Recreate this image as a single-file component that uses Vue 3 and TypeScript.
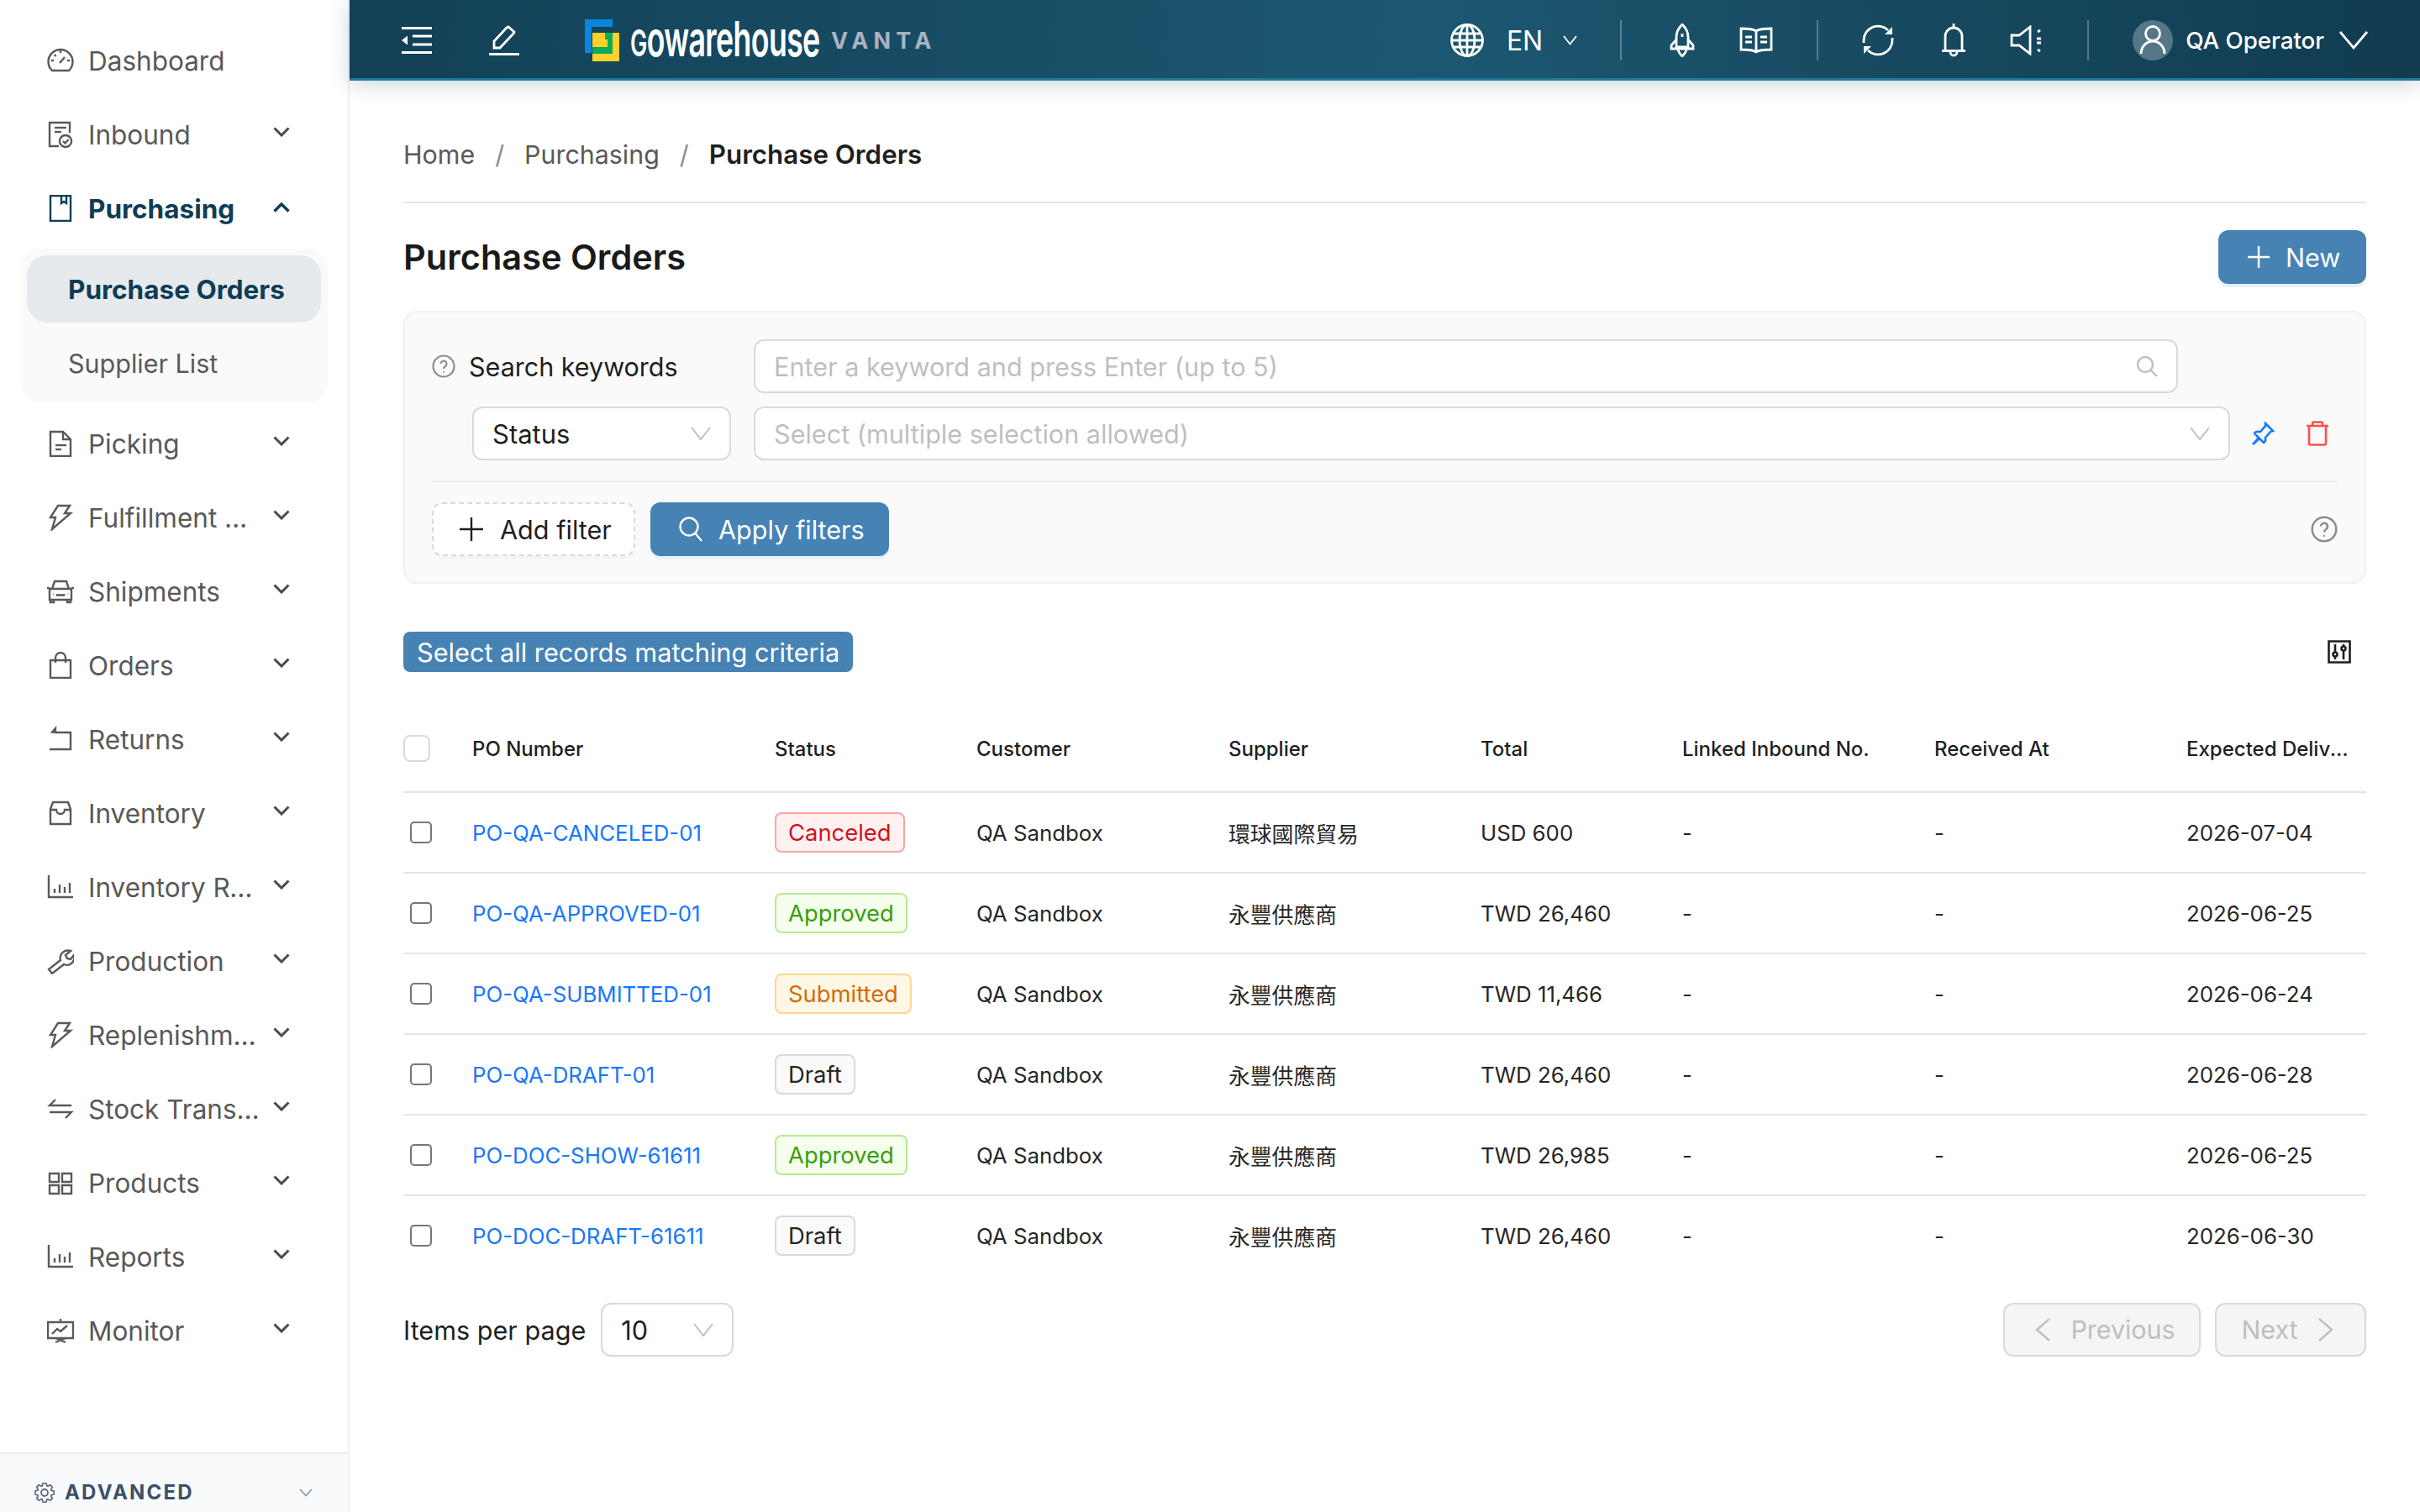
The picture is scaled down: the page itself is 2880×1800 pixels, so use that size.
<script setup lang="ts">
type NavItem = { label: string; icon: string }

const icons: Record<string, string[]> = {
  dashboard: ['M6 28A14.5 14.5 0 1 1 26 28Z', 'M15 19l6-7', 'M16 4v3', 'M5 16h3', 'M24 16h3', 'M8.5 9l2 2'],
  inbound: ['M27 14V2H3v28h11', 'M9 8h14', 'M9 13h8', 'M22 17a7 7 0 1 0 .01 0Z', 'M19 24l2.5 2.5 4-4.5'],
  book: ['M4 1h24v30H4Z', 'M17 1v9l3-2 3 2V1'],
  file: ['M4 2h15l9 9v20H4Z', 'M19 2v9h9', 'M10 18h13', 'M10 23h7'],
  bolt: ['M13 2h14l-6 9h7L6 30l4-14H4Z'],
  car: ['M6 13l3-9h14l3 9', 'M3 13h26v13H3Z', 'M0 12h3', 'M29 12h3', 'M4 26v3h4v-3', 'M24 26v3h4v-3', 'M12 19v1.5h8V19', 'M7 19h.5', 'M24.5 19h.5'],
  bag: ['M4 10h24v21H4Z', 'M10 13V7a6 6 0 0 1 12 0v6'],
  returns: ['M10 3L6 7.5 10 8Z', 'M10 8h18v20H3'],
  inbox: ['M4 11l3-8h18l3 8v18H4Z', 'M4 12h7a5 5 0 0 0 10 0h7'],
  chart: ['M2 2v26h29', 'M9 23v-5', 'M15 23V13', 'M21 23v-7', 'M27 23V11'],
  wrench: ['M2 26l14-11c-2-7 4-13 12-11l-6 5 2 4 4 1 4-5c2 8-5 14-12 11L6 31Z'],
  swap: ['M10 5L3 12h26', 'M3 20h26l-7 7'],
  grid: ['M3 5h11v10H3Z', 'M18 5h11v10H18Z', 'M3 19h11v10H3Z', 'M18 19h11v10H18Z'],
  monitor: ['M1 6h30v19H1Z', 'M16 6V2', 'M6 20l6-6 4 3 8-7', 'M10 30l12-5', 'M22 30l-12-5'],
}

const navItems: NavItem[] = [
  { label: 'Picking', icon: 'file' },
  { label: 'Fulfillment Center', icon: 'bolt' },
  { label: 'Shipments', icon: 'car' },
  { label: 'Orders', icon: 'bag' },
  { label: 'Returns', icon: 'returns' },
  { label: 'Inventory', icon: 'inbox' },
  { label: 'Inventory Reports', icon: 'chart' },
  { label: 'Production', icon: 'wrench' },
  { label: 'Replenishment', icon: 'bolt' },
  { label: 'Stock Transfer', icon: 'swap' },
  { label: 'Products', icon: 'grid' },
  { label: 'Reports', icon: 'chart' },
  { label: 'Monitor', icon: 'monitor' },
]

const columns = ['PO Number', 'Status', 'Customer', 'Supplier', 'Total', 'Linked Inbound No.', 'Received At', 'Expected Delivery']
const colWidths = [82, 360, 240, 300, 300, 240, 300, 300, 214]

const rows = [
  { po: 'PO-QA-CANCELED-01', status: 'Canceled', supplier: '環球國際貿易', total: 'USD 600', date: '2026-07-04' },
  { po: 'PO-QA-APPROVED-01', status: 'Approved', supplier: '永豐供應商', total: 'TWD 26,460', date: '2026-06-25' },
  { po: 'PO-QA-SUBMITTED-01', status: 'Submitted', supplier: '永豐供應商', total: 'TWD 11,466', date: '2026-06-24' },
  { po: 'PO-QA-DRAFT-01', status: 'Draft', supplier: '永豐供應商', total: 'TWD 26,460', date: '2026-06-28' },
  { po: 'PO-DOC-SHOW-61611', status: 'Approved', supplier: '永豐供應商', total: 'TWD 26,985', date: '2026-06-25' },
  { po: 'PO-DOC-DRAFT-61611', status: 'Draft', supplier: '永豐供應商', total: 'TWD 26,460', date: '2026-06-30' },
]

// small cog outline for the sidebar footer
function gearPath(c: number, inner: number, outer: number, teeth: number) {
  const pts: string[] = []
  const step = (Math.PI * 2) / teeth
  for (let i = 0; i < teeth; i++) {
    const a = i * step
    for (const [off, r] of [[-0.32, inner], [-0.14, outer], [0.14, outer], [0.32, inner]] as const) {
      const t = a + off * step * 1.4
      pts.push(`${(c + Math.cos(t) * r).toFixed(2)} ${(c + Math.sin(t) * r).toFixed(2)}`)
    }
  }
  return `M${pts.join('L')}Z`
}
const gear = gearPath(12, 8.5, 11.5, 8)
</script>

<template>
  <div class="app">
    <aside class="sidebar">
      <nav class="nav">
        <a class="nav-item">
          <svg class="nav-icon" viewBox="0 0 32 32"><path v-for="d in icons.dashboard" :key="d" :d="d" /></svg>
          <span class="nav-label">Dashboard</span>
        </a>
        <a class="nav-item">
          <svg class="nav-icon" viewBox="0 0 32 32"><path v-for="d in icons.inbound" :key="d" :d="d" /></svg>
          <span class="nav-label">Inbound</span>
          <svg class="nav-chev" viewBox="0 0 20 12"><path d="M1.5 1.5L10 10l8.5-8.5" /></svg>
        </a>
        <a class="nav-item nav-item--active">
          <svg class="nav-icon" viewBox="0 0 32 32"><path v-for="d in icons.book" :key="d" :d="d" /></svg>
          <span class="nav-label">Purchasing</span>
          <svg class="nav-chev nav-chev--up" viewBox="0 0 20 12"><path d="M1.5 10.5L10 2l8.5 8.5" /></svg>
        </a>
        <div class="submenu">
          <a class="sub-item sub-item--active">Purchase Orders</a>
          <a class="sub-item">Supplier List</a>
        </div>
        <a v-for="item in navItems" :key="item.label" class="nav-item">
          <svg class="nav-icon" viewBox="0 0 32 32"><path v-for="d in icons[item.icon]" :key="d" :d="d" /></svg>
          <span class="nav-label">{{ item.label }}</span>
          <svg class="nav-chev" viewBox="0 0 20 12"><path d="M1.5 1.5L10 10l8.5-8.5" /></svg>
        </a>
      </nav>
      <div class="side-foot">
        <svg class="gear" viewBox="0 0 24 24"><path :d="gear" /><circle cx="12" cy="12" r="4" /></svg>
        <span class="side-foot__label">ADVANCED</span>
        <svg class="side-foot__chev" viewBox="0 0 16 10"><path d="M1 1l7 7.5L15 1" /></svg>
      </div>
    </aside>

    <div class="main">
      <header class="topbar">
        <svg class="tb-icon" width="36" height="32" viewBox="0 0 36 32">
          <path d="M0 1.5h36M13 11h23M13 21h23M0 30.500h36" />
          <path class="solid" d="M0 16l7-5.5v11Z" />
        </svg>
        <svg class="tb-icon tb-edit" width="36" height="36" viewBox="0 0 36 36">
          <path d="M6 27V19L21 3l2-1 7 6-1 2L13 27Z" />
          <path d="M0 34.500h36" />
        </svg>
        <svg class="logo" width="41" height="50" viewBox="0 0 41 50">
          <path fill="#0a86dc" d="M0 0h33v9H8v31H0Z" />
          <path fill="#fdd02a" d="M9 16h32v34H9Z" />
          <path fill="#0bab5b" d="M9 41h24V16h-9v8h3v9H9Z" />
        </svg>
        <div class="wordmark"><span class="wordmark__g">g</span>owarehouse</div>
        <span class="vanta">VANTA</span>

        <div class="tb-right">
          <div class="tb-lang">
            <svg class="tb-icon" width="40" height="40" viewBox="0 0 40 40">
              <circle cx="20" cy="20" r="18.5" />
              <ellipse cx="20" cy="20" rx="9" ry="18.5" />
              <path d="M20 1.5v37M3 12h34M3 28h34M1.500 20h37" />
            </svg>
            <span class="tb-lang__text">EN</span>
            <svg class="tb-icon tb-thin" width="17" height="12" viewBox="0 0 17 12"><path d="M1 1l7.500 9.500L16 1" /></svg>
          </div>
          <span class="tb-divider tb-divider--first"></span>
          <div class="tb-group">
            <svg class="tb-icon" width="32" height="40" viewBox="0 0 32 40">
              <path d="M16 1c-5 5-7 10-7 15v12h14V16c0-5-2-10-7-15Z" />
              <path d="M9 19l-6 7v4h26v-4l-6-7" />
              <path d="M11 30c0 4 3 7 5 9 2-2 5-5 5-9" />
              <path d="M16 12v4" />
            </svg>
            <svg class="tb-icon" width="40" height="32" viewBox="0 0 40 32">
              <path d="M20 5C16 2 8 2 2 2v25c6 0 14 0 18 3 4-3 12-3 18-3V2c-6 0-14 0-18 3Z" />
              <path d="M20 5v25M7 12h8M7 18h8M25 12h8M25 18h8" />
            </svg>
          </div>
          <span class="tb-divider"></span>
          <div class="tb-group">
            <svg class="tb-icon tb-sync" width="38" height="38" viewBox="0 0 38 38">
              <path d="M2 22V19A17 17 0 0 1 31 7" />
              <path d="M36 16v3A17 17 0 0 1 7 31" />
              <path class="solid" d="M36 3v9h-9Z" />
              <path class="solid" d="M2 35v-9h9Z" />
            </svg>
            <svg class="tb-icon" width="30" height="40" viewBox="0 0 30 40">
              <path d="M15 0v4M5 32V15a10 10 0 0 1 20 0v17" />
              <path d="M1 32.500h28" />
              <path d="M11 34a4 4 0 0 0 8 0" />
            </svg>
            <svg class="tb-icon" width="40" height="36" viewBox="0 0 40 36">
              <path d="M24 2L11 12H2v12h9l13 10Z" />
              <path d="M33 8l3-2M32 16h5M32 21h5M33 29l3 2" />
            </svg>
          </div>
          <span class="tb-divider"></span>
          <div class="tb-user">
            <span class="avatar">
              <svg class="tb-icon" width="32" height="36" viewBox="0 0 32 36">
                <circle cx="16" cy="10" r="8.5" />
                <path d="M2 34c0-8 6-15 14-15s14 7 14 15" />
              </svg>
            </span>
            <span class="tb-user__name">QA Operator</span>
            <svg class="tb-icon" width="34" height="22" viewBox="0 0 34 22"><path d="M1 1l16 19L33 1" /></svg>
          </div>
        </div>
      </header>

      <main class="content">
        <div class="crumbs">
          <span>Home</span><span class="crumbs__sep">/</span>
          <span>Purchasing</span><span class="crumbs__sep">/</span>
          <span class="crumbs__current">Purchase Orders</span>
        </div>

        <div class="title-row">
          <h1 class="title">Purchase Orders</h1>
          <button class="btn btn--primary btn--new">
            <svg width="26" height="26" viewBox="0 0 26 26"><path d="M13 0v26M0 13h26" /></svg>
            New
          </button>
        </div>

        <section class="filters">
          <div class="filter-row">
            <div class="filter-label">
              <svg class="help" viewBox="0 0 28 28">
                <circle cx="14" cy="14" r="12.5" />
                <path d="M10.500 11a3.500 3.500 0 1 1 5.500 3c-1.300.9-2 1.500-2 3" />
                <circle class="dot" cx="14" cy="21" r="1" />
              </svg>
              <span>Search keywords</span>
            </div>
            <div class="field field--keyword">
              <span class="placeholder">Enter a keyword and press Enter (up to 5)</span>
              <svg class="field__search" viewBox="0 0 26 26"><circle cx="11" cy="11" r="9" /><path d="M17.500 17.500L25 25" /></svg>
            </div>
          </div>
          <div class="filter-row filter-row--second">
            <div class="field field--select">
              <span>Status</span>
              <svg class="field__chev" viewBox="0 0 24 16"><path d="M1 1l11 14L23 1" /></svg>
            </div>
            <div class="field field--grow">
              <span class="placeholder">Select (multiple selection allowed)</span>
              <svg class="field__chev" viewBox="0 0 24 16"><path d="M1 1l11 14L23 1" /></svg>
            </div>
            <div class="filter-actions">
              <svg class="pin" viewBox="0 0 28 28"><path d="M17 2l9 9-3 1-6 7 0 4-2 2-5-5-8 7 7-8-5-5 2-2 5 0 6-7Z" /></svg>
              <svg class="trash" viewBox="0 0 28 30"><path d="M1 6h26M8 6V3q0-1.500 1.500-1.500h9Q20 1.500 20 3v3M4 6v21q0 1.500 1.500 1.500h17Q24 28.500 24 27V6" /></svg>
            </div>
          </div>
          <div class="filter-foot">
            <button class="btn btn--dashed">
              <svg width="28" height="28" viewBox="0 0 28 28"><path d="M14 0v28M0 14h28" /></svg>
              Add filter
            </button>
            <button class="btn btn--primary btn--apply">
              <svg width="28" height="30" viewBox="0 0 28 30"><circle cx="12" cy="12" r="10.500" /><path d="M19.500 20L27 29" /></svg>
              Apply filters
            </button>
            <svg class="help help--foot" viewBox="0 0 28 28">
              <circle cx="14" cy="14" r="12.5" />
              <path d="M10.500 11a3.500 3.500 0 1 1 5.500 3c-1.300.9-2 1.500-2 3" />
              <circle class="dot" cx="14" cy="21" r="1" />
            </svg>
          </div>
        </section>

        <div class="select-row">
          <span class="select-all">Select all records matching criteria</span>
          <svg class="col-settings" viewBox="0 0 28 28">
            <path d="M1.500 1.500h25v25h-25Z" />
            <path d="M9 5v18M19 5v18" />
            <circle class="col-settings__dot" cx="9" cy="17" r="2.500" />
            <circle class="col-settings__dot" cx="19" cy="10" r="2.500" />
          </svg>
        </div>

        <table class="table">
          <colgroup>
            <col v-for="(w, i) in colWidths" :key="i" :style="{ width: w + 'px' }" />
          </colgroup>
          <thead>
            <tr>
              <th><input class="cb cb--head" type="checkbox" /></th>
              <th v-for="c in columns" :key="c"><span class="th-text">{{ c }}</span></th>
            </tr>
          </thead>
          <tbody>
            <tr v-for="r in rows" :key="r.po">
              <td><input class="cb" type="checkbox" /></td>
              <td><a class="po-link">{{ r.po }}</a></td>
              <td><span :class="['badge', `badge--${r.status.toLowerCase()}`]">{{ r.status }}</span></td>
              <td>QA Sandbox</td>
              <td>{{ r.supplier }}</td>
              <td>{{ r.total }}</td>
              <td>-</td>
              <td>-</td>
              <td>{{ r.date }}</td>
            </tr>
          </tbody>
        </table>

        <div class="pager">
          <span class="pager__label">Items per page</span>
          <div class="field field--size">
            <span>10</span>
            <svg class="field__chev" viewBox="0 0 24 16"><path d="M1 1l11 14L23 1" /></svg>
          </div>
          <div class="pager__nav">
            <button class="pager__btn pager__btn--prev">
              <svg width="18" height="28" viewBox="0 0 18 28"><path d="M17 1L2 14l15 13" /></svg>
              Previous
            </button>
            <button class="pager__btn pager__btn--next">
              Next
              <svg width="18" height="28" viewBox="0 0 18 28"><path d="M1 1l15 13L1 27" /></svg>
            </button>
          </div>
        </div>
      </main>
    </div>
  </div>
</template>

<style>
html, body { margin: 0; background: #fff; overflow: hidden; }
</style>

<style scoped>
.app {
  display: flex; width: 2880px; height: 1800px; overflow: hidden;
  font-family: Inter, "Noto Sans CJK TC", sans-serif; color: #1f1f1f; background: #fff;
}
svg { fill: none; stroke: currentColor; display: block; flex: none; }

/* Sidebar */
.sidebar {
  width: 416px; flex: none; box-sizing: border-box; border-right: 2px solid #f0f0f0;
  display: flex; flex-direction: column; background: #fff;
}
.nav { padding-top: 28px; }
.nav-item {
  display: flex; align-items: center; height: 88px; padding-left: 56px;
  color: #595959; font-size: 31.5px;
}
.nav-item--active { color: #0f3d56; font-weight: 700; }
.nav-icon { width: 32px; height: 32px; stroke-width: 2.4; }
.nav-label {
  width: 204px; margin-left: 17px; white-space: nowrap; overflow: hidden; text-overflow: ellipsis;
}
.nav-chev {
  width: 20px; height: 12px; margin-left: 16px; margin-top: -6px;
  stroke-width: 3; color: #4a4a4a;
}
.nav-chev--up { margin-top: -3px; color: #0f3d56; stroke-width: 3.5; }
.submenu {
  margin: 4px 24px; width: 366px; padding: 8px; box-sizing: border-box;
  background: #fafafa; border-radius: 24px;
}
.sub-item {
  display: flex; align-items: center; height: 80px; padding-left: 49px; border-radius: 24px;
  font-size: 30.5px; color: #595959;
}
.sub-item + .sub-item { margin-top: 8px; }
.sub-item--active { background: #e6eaec; color: #0f3d56; font-weight: 700; font-size: 31.5px; }

.side-foot {
  margin-top: auto; height: 71px; box-sizing: border-box; padding: 31px 42px 0 41px;
  border-top: 2px solid #e6eaf2; background: #f8fafc;
  display: flex; align-items: flex-start; color: #3d5068;
}
.gear { width: 24px; height: 24px; margin-top: 3px; stroke-width: 1.8; color: #5c6b7c; }
.side-foot__label { margin-left: 12px; font-size: 24px; font-weight: 700; letter-spacing: 2.2px; line-height: 30px; }
.side-foot__chev { width: 16px; height: 10px; margin: 10px 0 0 auto; stroke-width: 1.6; color: #8b97a5; }

/* Topbar */
.main { flex: 1; min-width: 0; display: flex; flex-direction: column; }
.topbar {
  position: relative; z-index: 1; height: 96px; box-sizing: border-box; flex: none;
  display: flex; align-items: center; padding: 3px 62px 0;
  background: linear-gradient(90deg, #124056 0%, #1c5771 52%, #113b4f 100%);
  border-bottom: 3px solid #1f7a96; color: #fff;
  box-shadow: 0 4px 24px rgba(18, 64, 86, 0.22);
}
.tb-icon { stroke-width: 2.8; color: #fff; }
.tb-icon .solid { fill: #fff; stroke: none; }
.tb-thin { stroke-width: 1.8; }
.tb-edit { margin-left: 68px; }
.logo { margin-left: 78px; stroke: none; }
.wordmark {
  margin-left: 13px; width: 226px; white-space: nowrap; color: #fff;
  font-size: 58px; font-weight: 600; line-height: 64px; letter-spacing: -1px;
  transform: scaleX(0.615); transform-origin: left center;
}
.wordmark__g { text-transform: uppercase; font-size: 44px; }
.vanta {
  margin-left: 13px; font-size: 27px; font-weight: 700; letter-spacing: 6.2px; color: #aab3c1;
}
.tb-right { margin-left: auto; display: flex; align-items: center; gap: 52px; }
.tb-lang { display: flex; align-items: center; margin-right: -1px; }
.tb-lang__text { margin: 0 24px 0 27px; font-size: 32px; }
.tb-divider { width: 2px; height: 48px; background: rgba(255, 255, 255, 0.28); }
.tb-divider--first { margin-right: 4px; }
.tb-group { display: flex; align-items: center; gap: 52px; }
.tb-sync { margin-right: 4px; }
.tb-user { display: flex; align-items: center; }
.avatar {
  width: 48px; height: 48px; border-radius: 50%; background: rgba(255, 255, 255, 0.28);
  display: flex; align-items: center; justify-content: center;
}
.tb-user__name { margin: 0 18px 0 15px; font-size: 27.7px; font-weight: 500; }

/* Page */
.content { padding: 0 64px; }
.crumbs {
  display: flex; align-items: center; height: 146px; padding-top: 32px; box-sizing: border-box;
  border-bottom: 2px solid #e5e5e5; font-size: 30.4px; color: #595959;
}
.crumbs__sep { margin: 0 24px; color: #8c8c8c; }
.crumbs__current { color: #1f1f1f; font-weight: 600; font-size: 31.3px; }
.title-row { display: flex; align-items: center; justify-content: space-between; margin-top: 32px; height: 64px; }
.title { margin: 0; font-size: 41.5px; font-weight: 600; color: #1a1a1a; }

.btn {
  display: inline-flex; align-items: center; height: 64px; box-sizing: border-box;
  border: 0; border-radius: 12px; font: inherit; font-size: 30.6px; cursor: pointer;
}
.btn--primary { background: #4682b4; color: #fff; box-shadow: 0 4px 0 #e6f1f7; }
.btn--primary svg { stroke-width: 2.4; }
.btn--new { width: 176px; padding-left: 35px; gap: 19px; }
.btn--apply { width: 284px; padding-left: 34px; gap: 19px; margin-left: 18px; }
.btn--dashed {
  width: 242px; padding-left: 31px; gap: 20px; background: #fff; color: #1f1f1f;
  border: 2px dashed #d9d9d9; box-shadow: 0 4px 0 rgba(0, 0, 0, 0.02);
}
.btn--dashed svg { stroke-width: 2.4; }

/* Filters */
.filters {
  margin-top: 32px; height: 325px; box-sizing: border-box; padding: 32px;
  background: #fafafa; border: 2px solid #f0f0f0; border-radius: 16px;
}
.filter-row { display: flex; align-items: center; height: 64px; }
.filter-row--second { margin-top: 16px; padding-left: 48px; }
.filter-label { width: 383px; flex: none; display: flex; align-items: center; gap: 16px; font-size: 30.5px; }
.help { width: 28px; height: 28px; stroke-width: 2.2; color: #8c8c8c; }
.help .dot { fill: #8c8c8c; stroke: none; }
.field {
  display: flex; align-items: center; justify-content: space-between; box-sizing: border-box;
  height: 64px; padding: 0 22px; background: #fff; border: 2px solid #d9d9d9; border-radius: 12px;
  font-size: 30.6px; color: #1f1f1f;
}
.field--keyword { flex: 1; margin-right: 190px; }
.field--select { width: 308px; flex: none; margin-right: 27px; font-size: 31px; }
.field--grow { flex: 1; }
.field--size { width: 158px; margin-left: 18px; }
.placeholder { color: #bfbfbf; }
.field__search { width: 26px; height: 26px; stroke-width: 2.4; color: #bfbfbf; }
.field__chev { width: 24px; height: 16px; stroke-width: 2; color: #bfbfbf; }
.filter-actions { display: flex; align-items: center; gap: 37px; margin-left: 25px; margin-right: 10px; }
.pin { width: 28px; height: 28px; stroke-width: 2.6; color: #1677ff; }
.trash { width: 28px; height: 30px; stroke-width: 2.6; color: #ff4d4f; }
.filter-foot {
  display: flex; align-items: center; margin-top: 24px; padding-top: 24px; border-top: 2px solid #f0f0f0;
}
.help--foot { width: 32px; height: 32px; margin-left: auto; }

.select-row { display: flex; align-items: center; justify-content: space-between; margin-top: 57px; height: 48px; padding-right: 18px; }
.select-all {
  display: flex; align-items: center; height: 48px; padding: 0 16px; border-radius: 8px;
  background: #4682b4; color: #fff; font-size: 30.7px;
}
.col-settings { width: 28px; height: 28px; stroke-width: 2.6; color: #1f1f1f; }
.col-settings__dot { fill: #fff; }

/* Table */
.table { width: 2336px; margin-top: 40px; border-collapse: collapse; table-layout: fixed; font-size: 25.8px; color: #262626; }
.table th {
  height: 102px; padding: 0; text-align: left; font-size: 24px; font-weight: 500; color: #1f1f1f;
  border-bottom: 2px solid #e5e5e5;
}
.th-text { display: block; padding-right: 22px; white-space: nowrap; overflow: hidden; text-overflow: ellipsis; }
.table th:last-child .th-text { padding-right: 12px; }
.table td { height: 94px; padding: 0; border-bottom: 2px solid #e5e5e5; }
.table tbody tr:last-child td { border-bottom: 0; }
.cb {
  display: block; appearance: none; margin: 0 0 1px 8px; width: 26px; height: 26px; box-sizing: border-box;
  background: #fff; border: 2px solid #767676; border-radius: 5px;
}
.cb--head { margin: 0; width: 32px; height: 32px; border-color: #d9d9d9; border-radius: 8px; }
.po-link { color: #1677ff; }
.badge {
  display: inline-flex; align-items: center; height: 48px; box-sizing: border-box; padding: 0 14px;
  border: 2px solid; border-radius: 8px; vertical-align: middle; font-size: 27.4px;
}
.badge--canceled { background: #fff1f0; border-color: #ffa39e; color: #cf1322; }
.badge--approved { background: #f6ffed; border-color: #b7eb8f; color: #389e0d; }
.badge--submitted { background: #fff7e6; border-color: #ffd591; color: #d46b08; }
.badge--draft { background: #fafafa; border-color: #d9d9d9; color: #262626; }

/* Pagination */
.pager { display: flex; align-items: center; margin-top: 33px; height: 64px; font-size: 30.6px; }
.pager__nav { margin-left: auto; display: flex; gap: 17px; }
.pager__btn {
  display: inline-flex; align-items: center; justify-content: center; gap: 24px; height: 64px; box-sizing: border-box;
  background: #f5f5f5; border: 2px solid #d9d9d9; border-radius: 12px; color: #bfbfbf; font: inherit; font-size: 30.4px;
}
.pager__btn svg { stroke-width: 2.4; }
.pager__btn--prev { width: 235px; padding: 0 6px 0 14px; }
.pager__btn--next { width: 180px; padding: 0 14px 0 6px; }
</style>
